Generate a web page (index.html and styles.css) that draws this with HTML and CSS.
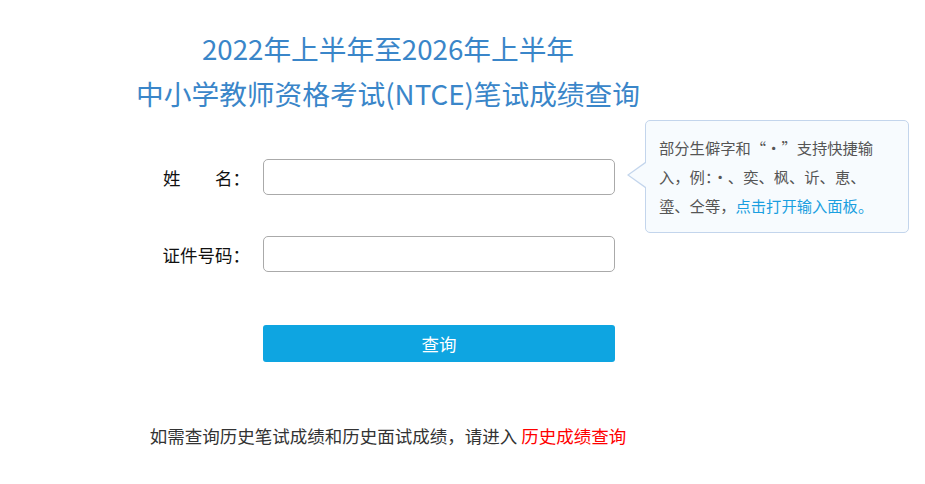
FILE: index.html
```html
<!DOCTYPE html>
<html lang="zh-CN">
<head>
<meta charset="utf-8">
<title>成绩查询</title>
<link rel="stylesheet" href="styles.css">
</head>
<body>
<div class="wrap">
  <h1 class="title">2022年上半年至2026年上半年<br>中小学教师资格考试(NTCE)笔试成绩查询</h1>
  <form class="form">
    <div class="row">
      <label class="label label-name"><span>姓</span><span>名：</span></label>
      <input class="field" type="text">
    </div>
    <div class="row">
      <label class="label">证件号码：</label>
      <input class="field" type="text">
    </div>
    <div class="row row-btn">
      <button type="button" class="btn">查询</button>
    </div>
  </form>
  <p class="note">如需查询历史笔试成绩和历史面试成绩，请进入 <a class="hist" href="#">历史成绩查询</a></p>
  <div class="tip">
    <p>部分生僻字和“·”支持快捷输入，例：·、奕、枫、䜣、恵、瑬、仝等，<a class="tip-link" href="#">点击打开输入面板。</a></p>
  </div>
</div>
</body>
</html>
```

FILE: styles.css
```css
* { box-sizing: border-box; }
body {
  margin: 0;
  background: #fff;
  font-family: "Noto Sans CJK SC", "Noto Sans", sans-serif;
  color: #333;
}
.wrap {
  position: relative;
  width: 925px;
  height: 484px;
  padding-top: 26px;
  overflow: hidden;
}
.title {
  width: 776px;
  margin: 0;
  text-align: center;
  font-size: 27.7px;
  font-weight: normal;
  line-height: 45px;
  color: #3a86c9;
}
.form {
  margin: 43px 0 0 150px;
}
.row {
  display: flex;
  align-items: center;
  gap: 13px;
  margin-bottom: 41px;
}
.label {
  width: 100px;
  text-align: right;
  font-size: 17.5px;
  color: #111;
  white-space: nowrap;
}
.label-name {
  display: flex;
  justify-content: space-between;
  padding-left: 13px;
}
.field {
  width: 352px;
  height: 36px;
  border: 1px solid #aaa;
  border-radius: 5px;
  background: #fff;
  outline: none;
}
.row-btn {
  margin: 53px 0 0 113px;
}
.btn {
  width: 352px;
  height: 37px;
  border: none;
  border-radius: 3px;
  background: #0ea5e1;
  color: #fff;
  font-family: inherit;
  font-size: 17.5px;
}
.note {
  width: 776px;
  margin: 62px 0 0;
  text-align: center;
  font-size: 17.5px;
  line-height: 24px;
  color: #333;
}
.hist {
  color: #f00;
  text-decoration: none;
}
.tip {
  position: absolute;
  left: 645px;
  top: 120px;
  width: 264px;
  height: 113px;
  padding: 12px 29px 0 13px;
  background: #f7fbfe;
  border: 1px solid #c3d5ec;
  border-radius: 5px;
}
.tip::before,
.tip::after {
  content: "";
  position: absolute;
  border-style: solid;
  border-color: transparent;
}
.tip::before {
  left: -19px;
  top: 41px;
  border-width: 13px 18px 13px 0;
  border-right-color: #c3d5ec;
}
.tip::after {
  left: -17px;
  top: 42px;
  border-width: 12px 17px 12px 0;
  border-right-color: #f7fbfe;
}
.tip p {
  margin: 0;
  font-size: 15.3px;
  line-height: 29px;
  color: #555;
}
.tip-link {
  color: #1a9fe0;
  text-decoration: none;
}
```
